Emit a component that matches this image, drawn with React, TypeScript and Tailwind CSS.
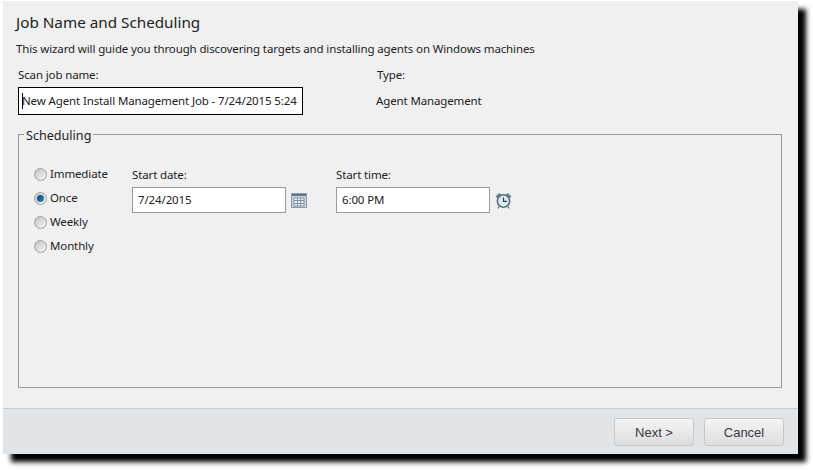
const font = "font-['Noto_Sans',sans-serif]";
const small = "text-[11.5px] tracking-[-0.13px] text-[#222]";

function Radio({ label, checked }: { label: string; checked?: boolean }) {
  return (
    <label className={`flex h-6 items-center gap-[3px] ${small}`}>
      <span className="flex h-[13px] w-[13px] items-center justify-center rounded-full border border-[#a0a0a0] bg-gradient-to-br from-[#c4c4c4] to-[#f6f6f6]">
        {checked && <span className="h-[7px] w-[7px] rounded-full bg-gradient-to-br from-[#0c3a60] to-[#2c94d6]" />}
      </span>
      {label}
    </label>
  );
}

function CalendarIcon() {
  return (
    <svg width="16" height="15" viewBox="0 0 16 15" className="shrink-0">
      <rect x="0.5" y="0.5" width="15" height="14" fill="#c9d4dd" stroke="#8a9aa8" />
      <rect x="1" y="1" width="14" height="2" fill="#5f7486" />
      <path d="M3 5h10v8H3z M3 7.5h10 M3 10.5h10 M6.5 5v8 M9.5 5v8" fill="#f4f6f8" stroke="#7d92a5" />
    </svg>
  );
}

function ClockIcon() {
  return (
    <svg width="17" height="17" viewBox="0 0 17 17" className="shrink-0">
      <path d="M0.5 4.5 4 1 6.5 2.5 2.5 6.5z M16.5 4.5 13 1 10.5 2.5 14.5 6.5z" fill="#6f8496" />
      <path d="M4 14.5 3 16.5 M13 14.5 14 16.5" stroke="#5d7080" strokeWidth="1.3" />
      <circle cx="8.5" cy="9" r="6.2" fill="#dfe9f0" stroke="#557287" strokeWidth="1.6" />
      <path d="M8.5 5.5V9.3H12" fill="none" stroke="#2c4152" strokeWidth="1.2" />
    </svg>
  );
}

export default function App() {
  return (
    <div className={`h-[471px] w-[813px] overflow-hidden bg-white pl-[3px] pt-[1px] ${font}`}>
      <div className="flex h-[453px] w-[795px] flex-col bg-[#f0f0f0] shadow-[8px_8px_5px_#000]">
        <div className="flex flex-1 flex-col pl-[13px] pr-[16px]">
          <h1 className="mt-[10px] h-[22px] text-[15.25px] leading-[22px] text-[#222]">Job Name and Scheduling</h1>
          <p className={`mt-[8px] h-[16px] leading-[16px] ${small}`}>
            This wizard will guide you through discovering targets and installing agents on Windows machines
          </p>

          <div className="mt-[8px] flex pl-[2px]">
            <div className="w-[359px]">
              <div className={`h-[22px] leading-[20px] ${small}`}>Scan job name:</div>
              <div className={`flex h-[28px] w-[285px] items-center overflow-hidden border border-black bg-white pl-[3px] whitespace-nowrap ${small}`}>
                <span className="mr-[-1px] h-[16px] w-[1px] shrink-0 bg-black" />
                New Agent Install Management Job - 7/24/2015 5:24
              </div>
            </div>
            <div>
              <div className={`h-[22px] leading-[20px] ${small}`}>Type:</div>
              <div className={`ml-[-1px] flex h-[28px] items-center ${small}`}>Agent Management</div>
            </div>
          </div>

          <fieldset className="ml-[2px] mt-[9px] h-[264px] border border-[#9a9a9a] pl-[15px] pt-[17px]">
            <legend className="ml-[-10px] px-[2px] pt-[3px] text-[12.6px] leading-[18px] text-[#222]">Scheduling</legend>
            <div className="flex">
              <div className="w-[98px]">
                <Radio label="Immediate" />
                <Radio label="Once" checked />
                <Radio label="Weekly" />
                <Radio label="Monthly" />
              </div>
              <div className="w-[204px] pt-[3px]">
                <div className={`h-[22px] pt-[1px] leading-[18px] ${small}`}>Start date:</div>
                <div className="flex items-center gap-[5px]">
                  <div className={`flex h-[26px] w-[154px] items-center border border-[#9a9a9a] bg-white pl-[5px] ${small}`}>7/24/2015</div>
                  <CalendarIcon />
                </div>
              </div>
              <div className="pt-[3px]">
                <div className={`h-[22px] pt-[1px] leading-[18px] ${small}`}>Start time:</div>
                <div className="flex items-center gap-[5px]">
                  <div className={`flex h-[26px] w-[154px] items-center border border-[#9a9a9a] bg-white pl-[5px] ${small}`}>6:00 PM</div>
                  <ClockIcon />
                </div>
              </div>
            </div>
          </fieldset>
        </div>

        <div className="flex h-[46px] items-start justify-end gap-[10px] border-t border-[#c8ccd0] bg-[#e2e5e8] pr-[14px] pt-[9px]">
          <button className="h-[28px] w-[80px] rounded-[3px] border border-[#c8c8c8] bg-gradient-to-b from-[#f4f4f4] to-[#dedede] pt-[1px] font-['Liberation_Sans',sans-serif] text-[13px] text-[#3a3a44]">Next &gt;</button>
          <button className="h-[28px] w-[80px] rounded-[3px] border border-[#c8c8c8] bg-gradient-to-b from-[#f4f4f4] to-[#dedede] pt-[1px] font-['Liberation_Sans',sans-serif] text-[13px] text-[#3a3a44]">Cancel</button>
        </div>
      </div>
    </div>
  );
}
